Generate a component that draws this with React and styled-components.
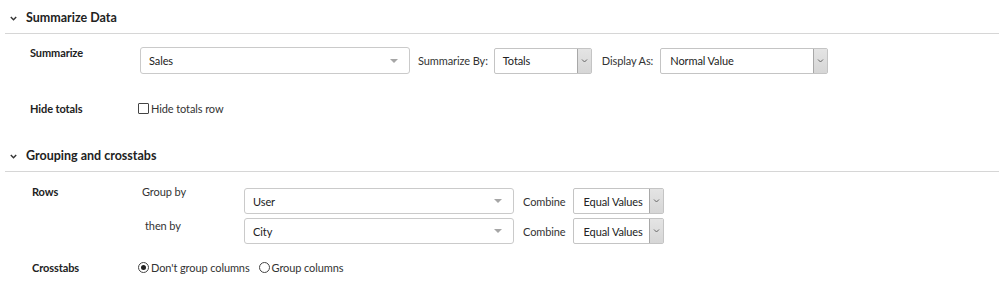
import React from 'react';
import styled, { createGlobalStyle } from 'styled-components';

const GlobalStyle = createGlobalStyle`
  body {
    margin: 0;
    background: #fff;
    font-family: Lato, "Open Sans", sans-serif;
    font-size: 11px;
    letter-spacing: -0.1px;
    line-height: 15px;
    color: #333;
  }
`;

const Page = styled.div`
  width: 999px;
  height: 293px;
  overflow: hidden;
`;

const Section = styled.section`
  margin-left: 5px;
  padding-bottom: ${({ $bottom }) => $bottom || 0}px;
`;

const Header = styled.div`
  display: flex;
  align-items: center;
  gap: 9px;
  padding: 10px 0 0 5px;
  font-size: 12.5px;
  letter-spacing: 0;
  line-height: 16px;
  font-weight: 700;
  color: #222;
`;

const Divider = styled.div`
  height: 1px;
  margin-top: 7px;
  background: #d6d6d6;
`;

const Body = styled.div`
  padding-left: 25px;
`;

const Row = styled.div`
  display: grid;
  grid-template-columns: 110px auto;
  align-items: ${({ $center }) => ($center ? 'center' : 'start')};
  margin-top: ${({ $top }) => $top}px;
`;

const Label = styled.div`
  font-weight: 700;
  color: #222;
  padding-left: ${({ $indent }) => $indent || 0}px;
`;

const Controls = styled.div`
  display: flex;
  align-items: center;
  margin-top: ${({ $top }) => $top || 0}px;
`;

const Inline = styled.span`
  margin: 0 ${({ $right }) => $right}px 0 ${({ $left }) => $left}px;
  white-space: nowrap;
`;

const Combo = styled.div`
  box-sizing: border-box;
  display: flex;
  align-items: center;
  justify-content: space-between;
  width: ${({ $w }) => $w}px;
  height: ${({ $h }) => $h}px;
  padding: 0 11px 0 8px;
  border: 1px solid #cacaca;
  border-radius: 3px;
  color: #222;
`;

const Caret = styled.span`
  width: 0;
  height: 0;
  border-left: 4px solid transparent;
  border-right: 4px solid transparent;
  border-top: 4px solid #a6a6a6;
`;

const Select = styled.div`
  box-sizing: border-box;
  display: flex;
  align-items: stretch;
  width: ${({ $w }) => $w}px;
  height: 26px;
  border: 1px solid #c4c4c4;
  border-radius: 2px;
  color: #222;
`;

const SelectText = styled.span`
  flex: 1;
  display: flex;
  align-items: center;
  padding-left: ${({ $pad }) => $pad}px;
  white-space: nowrap;
`;

const ArrowBox = styled.span`
  width: 13px;
  display: flex;
  align-items: center;
  justify-content: center;
  background: linear-gradient(#e4e4e4, #d6d6d6);
  border-left: 1px solid #a8a8a8;
`;

const Stack = styled.div`
  display: flex;
  flex-direction: column;
  gap: 4px;
  margin-top: 4px;
`;

const SubRow = styled.div`
  display: grid;
  grid-template-columns: 104px auto;
  align-items: start;
`;

const SubLabel = styled.div`
  padding-left: ${({ $indent }) => $indent}px;
  margin-top: ${({ $shift }) => $shift}px;
`;

const Choice = styled.label`
  display: inline-flex;
  align-items: center;
  gap: 2px;
  margin-left: ${({ $left }) => $left || 0}px;
  margin-right: ${({ $right }) => $right || 0}px;
  color: #333;
`;

const Box = styled.span`
  box-sizing: border-box;
  width: 11px;
  height: 11px;
  border: 1px solid #444;
  border-radius: 1px;
  background: #fff;
`;

const Radio = styled.span`
  box-sizing: border-box;
  width: 11px;
  height: 11px;
  border: 1px solid #444;
  border-radius: 50%;
  display: flex;
  align-items: center;
  justify-content: center;

  &::after {
    content: '';
    width: 5px;
    height: 5px;
    border-radius: 50%;
    background: ${({ $on }) => ($on ? '#222' : 'transparent')};
  }
`;

const Chevron = () => (
  <svg width="7" height="5" viewBox="0 0 7 5" fill="none">
    <path d="M0.8 1 L3.5 3.8 L6.2 1" stroke="#333" strokeWidth="1.4" />
  </svg>
);

const SmallChevron = () => (
  <svg width="7" height="4" viewBox="0 0 7 4" fill="none">
    <path d="M1 0.5 L3.5 3 L6 0.5" stroke="#666" strokeWidth="1" />
  </svg>
);

const Dropdown = ({ value, width, pad = 10 }) => (
  <Select $w={width}>
    <SelectText $pad={pad}>{value}</SelectText>
    <ArrowBox>
      <SmallChevron />
    </ArrowBox>
  </Select>
);

const ComboBox = ({ value, height = 26 }) => (
  <Combo $w={270} $h={height}>
    {value}
    <Caret />
  </Combo>
);

const App = () => (
  <Page>
    <GlobalStyle />
    <Section $bottom={22}>
      <Header>
        <Chevron />
        Summarize Data
      </Header>
      <Divider />
      <Body>
        <Row $top={11}>
          <Label>Summarize</Label>
          <Controls $top={2}>
            <ComboBox value="Sales" height={27} />
            <Inline $left={8} $right={6}>Summarize By:</Inline>
            <Dropdown value="Totals" width={98} pad={8} />
            <Inline $left={10} $right={7}>Display As:</Inline>
            <Dropdown value="Normal Value" width={168} pad={9} />
          </Controls>
        </Row>
        <Row $top={27} $center>
          <Label>Hide totals</Label>
          <Controls>
            <Choice $left={-2}>
              <Box />
              Hide totals row
            </Choice>
          </Controls>
        </Row>
      </Body>
    </Section>

    <Section>
      <Header>
        <Chevron />
        Grouping and crosstabs
      </Header>
      <Divider />
      <Body>
        <Row $top={12}>
          <Label $indent={2}>Rows</Label>
          <Stack>
            <SubRow>
              <SubLabel $indent={2} $shift={-4}>Group by</SubLabel>
              <Controls>
                <ComboBox value="User" />
                <Inline $left={9} $right={7}>Combine</Inline>
                <Dropdown value="Equal Values" width={91} />
              </Controls>
            </SubRow>
            <SubRow>
              <SubLabel $indent={5} $shift={0}>then by</SubLabel>
              <Controls>
                <ComboBox value="City" />
                <Inline $left={9} $right={7}>Combine</Inline>
                <Dropdown value="Equal Values" width={91} />
              </Controls>
            </SubRow>
          </Stack>
        </Row>
        <Row $top={16} $center>
          <Label $indent={2}>Crosstabs</Label>
          <Controls>
            <Choice $left={-2} $right={9}>
              <Radio $on />
              Don't group columns
            </Choice>
            <Choice>
              <Radio />
              Group columns
            </Choice>
          </Controls>
        </Row>
      </Body>
    </Section>
  </Page>
);

export default App;
